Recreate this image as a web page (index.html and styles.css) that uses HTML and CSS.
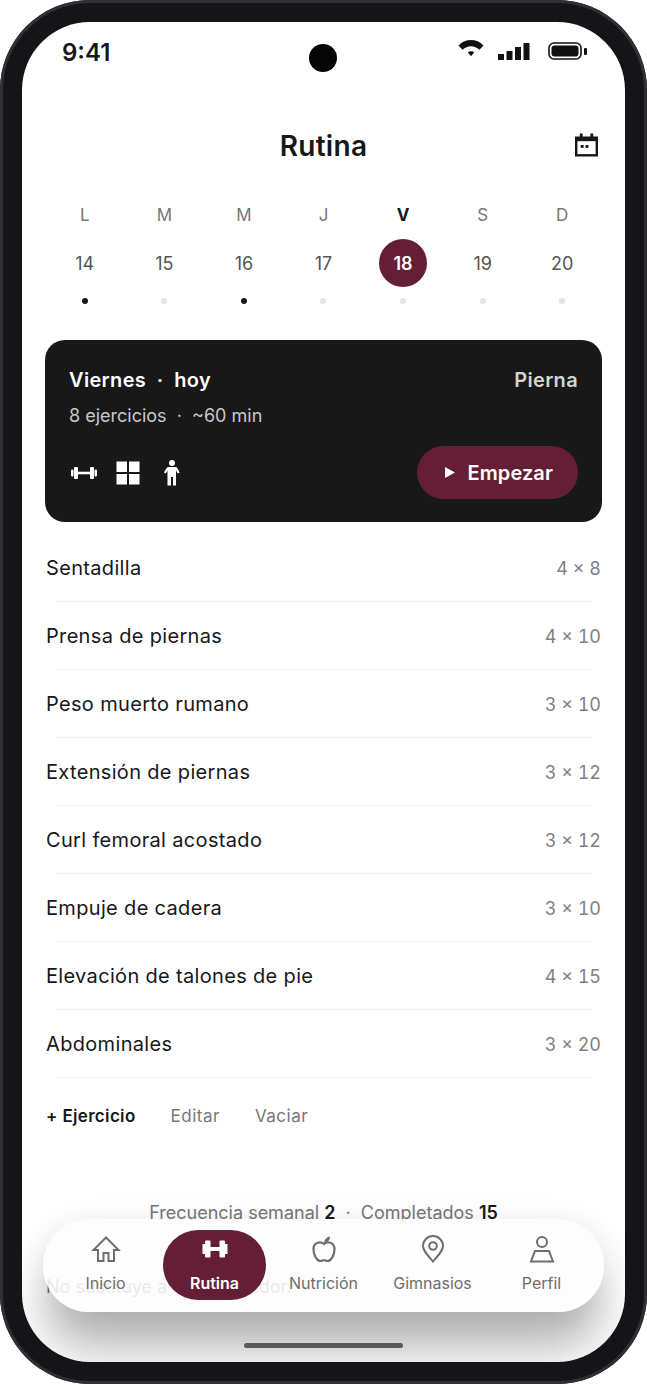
FILE: index.html
```html
<!DOCTYPE html>
<html lang="es">
<head>
    <meta charset="UTF-8">
    <meta name="viewport" content="width=device-width, initial-scale=1.0">
    <title>Rutina</title>
    <link rel="stylesheet" href="styles.css">
</head>
<body>
<div class="phone">
  <div class="screen">
    <div class="camera"></div>

    <div class="status">
      <span class="clock">9:41</span>
      <div class="status-icons">
        <svg class="wifi" width="26" height="18" viewBox="0 0 26 18"><path d="M0.5 6.5C7.5 -0.8 18.5 -0.8 25.5 6.5L21.5 10.8C16.5 6 9.5 6 4.5 10.8Z" fill="#111"/><path d="M9.8 13.3C11.8 11.8 14.2 11.8 16.2 13.3L13 17.2Z" fill="#111"/></svg>
        <svg class="signal" width="32" height="18" viewBox="0 0 32 18"><rect x="0" y="11" width="6" height="6" fill="#111"/><rect x="8.500" y="8" width="6" height="9" fill="#111"/><rect x="17" y="4" width="6" height="13" fill="#111"/><rect x="25.500" y="0" width="6" height="17" fill="#111"/></svg>
        <svg class="battery" width="40" height="18" viewBox="0 0 40 18"><rect x="1" y="1" width="32" height="16" rx="5" fill="none" stroke="#111" stroke-width="1.600"/><rect x="3.500" y="3.500" width="27" height="11" rx="3" fill="#111"/><rect x="36" y="6" width="3" height="7" rx="1" fill="#111"/></svg>
      </div>
    </div>

    <header class="title-bar">
      <h1>Rutina</h1>
      <svg class="cal-icon" width="23" height="24" viewBox="0 0 24 24"><path d="M5 0h3v3h8V0h3v3h5v21H0V3h5z" fill="#17171a"/><rect x="2.500" y="8" width="19" height="13.500" fill="#fff"/><rect x="6" y="12" width="3" height="3" fill="#17171a"/><rect x="11" y="12" width="3" height="3" fill="#17171a"/></svg>
    </header>

    <div class="week">
      <div class="day"><span class="letter">L</span><span class="num">14</span><i class="dot on"></i></div>
      <div class="day"><span class="letter">M</span><span class="num">15</span><i class="dot"></i></div>
      <div class="day"><span class="letter">M</span><span class="num">16</span><i class="dot on"></i></div>
      <div class="day"><span class="letter">J</span><span class="num">17</span><i class="dot"></i></div>
      <div class="day today"><span class="letter">V</span><span class="num">18</span><i class="dot"></i></div>
      <div class="day"><span class="letter">S</span><span class="num">19</span><i class="dot"></i></div>
      <div class="day"><span class="letter">D</span><span class="num">20</span><i class="dot"></i></div>
    </div>

    <section class="card">
      <div class="card-top">
        <div>
          <div class="card-title">Viernes &nbsp;·&nbsp; hoy</div>
          <div class="card-sub">8 ejercicios &nbsp;·&nbsp; ~60 min</div>
        </div>
        <div class="card-tag">Pierna</div>
      </div>
      <div class="card-bottom">
        <div class="card-icons">
          <svg width="26" height="14" viewBox="0 0 26 14"><rect x="0" y="3.500" width="2.500" height="7" rx="1" fill="#fff"/><rect x="3" y="1" width="4" height="12" rx="1" fill="#fff"/><rect x="7" y="5.700" width="12" height="2.600" fill="#fff"/><rect x="19" y="1" width="4" height="12" rx="1" fill="#fff"/><rect x="23.500" y="3.500" width="2.500" height="7" rx="1" fill="#fff"/></svg>
          <svg width="24" height="24" viewBox="0 0 24 24"><rect x="0.500" y="0.500" width="10.500" height="10.500" fill="#fff"/><rect x="13" y="0.500" width="10.500" height="10.500" fill="#fff"/><rect x="0.500" y="13" width="10.500" height="10.500" fill="#fff"/><rect x="13" y="13" width="10.500" height="10.500" fill="#fff"/></svg>
          <svg class="person" width="16" height="26" viewBox="0 0 16 26"><circle cx="8" cy="3" r="3" fill="#fff"/><path d="M4.500 7h7c.8 0 1.400.3 1.800 1l2.400 4.500-2 1-1.700-3V25.500H9V17H7v8.500H3.500V10.500l-1.700 3-2-1L2.700 8c.4-.7 1-1 1.800-1z" fill="#fff"/></svg>
        </div>
        <button class="start"><svg width="10" height="11" viewBox="0 0 10 11"><path d="M0 0l10 5.500L0 11z" fill="#fff"/></svg>Empezar</button>
      </div>
    </section>

    <ul class="exercises">
      <li><span>Sentadilla</span><span class="sets">4 × 8</span></li>
      <li><span>Prensa de piernas</span><span class="sets">4 × 10</span></li>
      <li><span>Peso muerto rumano</span><span class="sets">3 × 10</span></li>
      <li><span>Extensión de piernas</span><span class="sets">3 × 12</span></li>
      <li><span>Curl femoral acostado</span><span class="sets">3 × 12</span></li>
      <li><span>Empuje de cadera</span><span class="sets">3 × 10</span></li>
      <li><span>Elevación de talones de pie</span><span class="sets">4 × 15</span></li>
      <li><span>Abdominales</span><span class="sets">3 × 20</span></li>
    </ul>

    <div class="actions">
      <span class="add">+ Ejercicio</span>
      <span>Editar</span>
      <span>Vaciar</span>
    </div>

    <p class="stats">Frecuencia semanal <b>2</b> &nbsp;·&nbsp; Completados <b>15</b></p>
    <p class="note">No sustituye a tu entrenador.</p>

    <nav class="tabbar">
      <div class="tab">
        <svg width="30" height="28" viewBox="0 0 30 28" fill="none" stroke="#6e6e6e" stroke-width="2"><path d="M15 2.500L2.500 15H7V26h5.500v-8h5v8H23V15h4.500z"/></svg>
        <span>Inicio</span>
      </div>
      <div class="tab active">
        <svg width="26" height="20" viewBox="0 0 26 20"><rect x="0.500" y="5" width="3" height="10" rx="0.500" fill="#fff"/><rect x="3" y="1.500" width="5.500" height="17" rx="1" fill="#fff"/><rect x="8" y="8" width="10" height="4" fill="#fff"/><rect x="17.500" y="1.500" width="5.500" height="17" rx="1" fill="#fff"/><rect x="22.500" y="5" width="3" height="10" rx="0.500" fill="#fff"/></svg>
        <span>Rutina</span>
      </div>
      <div class="tab">
        <svg width="26" height="28" viewBox="0 0 26 28" fill="none" stroke="#6e6e6e" stroke-width="2.200"><path d="M13 9C10 6.500 2.500 6.500 2.500 14.500 2.500 20 6 26 9.500 26c1.500 0 2.500-1 3.500-1s2 1 3.500 1c3.500 0 7-6 7-11.500C23.500 6.500 16 6.500 13 9z"/><path d="M13.500 7.500C14 4.500 16 2.500 18.500 2c0 3-2 5-5 5.500z" fill="#6e6e6e" stroke-width="1"/></svg>
        <span>Nutrición</span>
      </div>
      <div class="tab">
        <svg width="24" height="28" viewBox="0 0 24 28" fill="none" stroke="#6e6e6e" stroke-width="2"><path d="M12 26.500C6 19.500 2 15.500 2 11a10 10 0 0 1 20 0c0 4.500-4 8.500-10 15.500z"/><circle cx="12" cy="11" r="3.800"/></svg>
        <span>Gimnasios</span>
      </div>
      <div class="tab">
        <svg width="26" height="28" viewBox="0 0 26 28" fill="none" stroke="#6e6e6e" stroke-width="2"><circle cx="13" cy="7" r="5"/><path d="M6 16h14l4 10.500H2z"/></svg>
        <span>Perfil</span>
      </div>
    </nav>

    <div class="home-bar"></div>
  </div>
</div>
</body>
</html>
```

FILE: styles.css
```css
* {
    box-sizing: border-box;
}

html, body {
    margin: 0;
    height: 100%;
    background: #fff;
}

body {
    font-family: "Inter", "Liberation Sans", sans-serif;
    color: #17171a;
    overflow: hidden;
}

.phone {
    width: 647px;
    height: 1384px;
    padding: 22px;
    background: #151517;
    border-radius: 90px;
    box-shadow: inset 0 0 0 3px #303034;
}

.screen {
    position: relative;
    height: 1340px;
    padding: 0 23px;
    background: #fff;
    border-radius: 68px;
    overflow: hidden;
}

.camera {
    position: absolute;
    top: 22px;
    left: 287px;
    width: 28px;
    height: 28px;
    border-radius: 50%;
    background: #050505;
}

.status {
    display: flex;
    justify-content: space-between;
    height: 90px;
    padding: 15px 14px 0 17px;
}

.clock {
    font-size: 24px;
    font-weight: 600;
    line-height: 32px;
}

.status-icons {
    display: flex;
    align-items: flex-start;
    gap: 14px;
    padding-top: 2px;
}

.signal {
    margin-top: 4px;
}

.battery {
    margin-top: 3px;
    margin-left: 4px;
}

.title-bar {
    display: flex;
    justify-content: center;
    align-items: center;
    position: relative;
    height: 68px;
}

.title-bar h1 {
    margin: 0;
    font-size: 28px;
    font-weight: 600;
    letter-spacing: 0.3px;
}

.cal-icon {
    position: absolute;
    right: 4px;
    top: 21px;
}

.week {
    display: grid;
    grid-template-columns: repeat(7, 1fr);
    margin-top: 23px;
}

.day {
    display: flex;
    flex-direction: column;
    align-items: center;
}

.letter {
    font-size: 17px;
    line-height: 24px;
    color: #777;
}

.num {
    display: flex;
    justify-content: center;
    align-items: center;
    width: 48px;
    height: 48px;
    margin-top: 12px;
    font-size: 18px;
    color: #555;
    border-radius: 50%;
}

.today .letter {
    font-weight: 700;
    color: #17171a;
}

.today .num {
    font-weight: 600;
    color: #fff;
    background: #641f37;
}

.dot {
    width: 6px;
    height: 6px;
    margin-top: 11px;
    border-radius: 50%;
    background: #e4e4e4;
}

.dot.on {
    background: #17171a;
}

.card {
    height: 182px;
    margin-top: 36px;
    padding: 24px 24px 23px;
    color: #fff;
    background: #181818;
    border-radius: 20px;
}

.card-top {
    display: flex;
    justify-content: space-between;
}

.card-title {
    font-size: 20px;
    font-weight: 600;
    line-height: 32px;
    letter-spacing: 0.33px;
}

.card-tag {
    font-size: 20px;
    font-weight: 600;
    line-height: 32px;
    letter-spacing: 0.33px;
    color: #d4d4d4;
}

.card-sub {
    margin-top: 7px;
    font-size: 18px;
    line-height: 26px;
    color: #c8c8c8;
}

.card-bottom {
    display: flex;
    justify-content: space-between;
    align-items: center;
    margin-top: 17px;
}

.card-icons {
    display: flex;
    align-items: center;
    gap: 19px;
    padding-left: 2px;
}

.person {
    margin-left: 5px;
}

.start {
    display: flex;
    align-items: center;
    gap: 12px;
    height: 53px;
    padding: 0 25px 0 28px;
    font-family: inherit;
    font-size: 20px;
    font-weight: 600;
    letter-spacing: 0.1px;
    color: #fff;
    background: #641f37;
    border: none;
    border-radius: 27px;
}

.exercises {
    margin: 12px 0 0;
    padding: 0;
    list-style: none;
}

.exercises li {
    position: relative;
    display: flex;
    justify-content: space-between;
    align-items: center;
    height: 68px;
    padding-left: 1px;
    font-size: 20px;
    letter-spacing: 0.33px;
}

.exercises li::after {
    content: "";
    position: absolute;
    left: 10px;
    right: 10px;
    bottom: 0;
    height: 1px;
    background: #f0f0f0;
}

.sets {
    margin-right: 1px;
    font-size: 18px;
    font-variant-numeric: tabular-nums;
    letter-spacing: 0;
    color: #808080;
}

.actions {
    display: flex;
    gap: 35px;
    margin-top: 24px;
    padding-left: 1px;
    font-size: 17px;
    line-height: 28px;
    letter-spacing: 0.5px;
    color: #777;
}

.add {
    font-weight: 600;
    letter-spacing: 0.33px;
    color: #17171a;
}

.stats {
    margin: 69px 0 0;
    font-size: 18px;
    line-height: 28px;
    text-align: center;
    color: #777;
}

.stats b {
    font-weight: 600;
    color: #17171a;
}

.note {
    margin: 46px 0 0;
    padding-left: 1px;
    font-size: 18px;
    line-height: 28px;
    color: #777;
}

.tabbar {
    position: absolute;
    left: 21px;
    right: 21px;
    top: 1197px;
    display: grid;
    grid-template-columns: repeat(5, 1fr);
    height: 93px;
    padding: 11px 8px 12px;
    background: rgba(253, 253, 253, 0.86);
    border-radius: 46px;
    box-shadow: 0 0 30px rgba(0, 0, 0, 0.06), 0 38px 48px -2px rgba(0, 0, 0, 0.3);
}

.tab {
    display: flex;
    flex-direction: column;
    align-items: center;
    justify-content: flex-start;
    padding-top: 5px;
    font-size: 16px;
    color: #6e6e6e;
}

.tab svg {
    height: 28px;
}

.tab span {
    margin-top: 10px;
    line-height: 20px;
}

.tab.active {
    width: 103px;
    justify-self: center;
    font-weight: 600;
    color: #fff;
    background: #641f37;
    border-radius: 35px;
}

.home-bar {
    position: absolute;
    left: 222px;
    bottom: 14px;
    width: 159px;
    height: 5px;
    background: #5a5a5a;
    border-radius: 3px;
}
```
